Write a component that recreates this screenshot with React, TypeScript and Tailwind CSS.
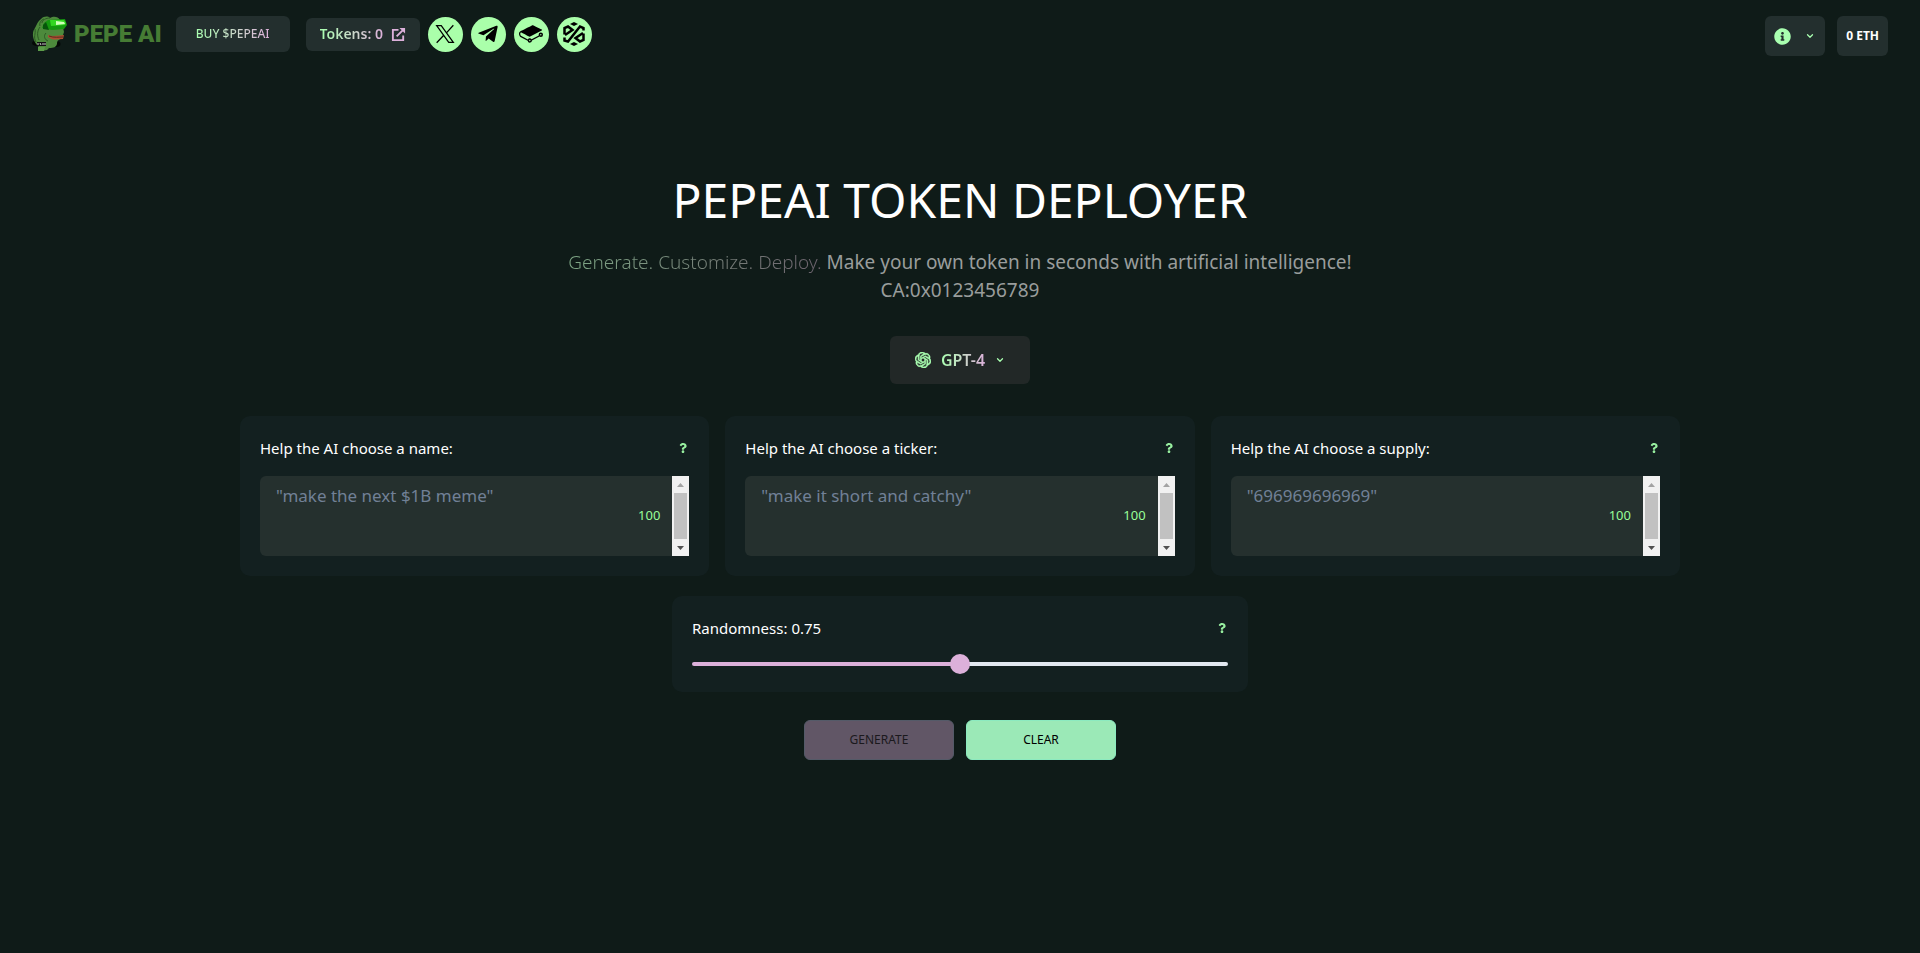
import { useState } from "react";
import { FaTelegramPlane, FaInfoCircle, FaQuestion } from "react-icons/fa";
import { SiOpenai } from "react-icons/si";
import { FiChevronDown } from "react-icons/fi";

const gradientText = "bg-gradient-to-r from-[#a9ffb0] to-[#dcb0da] bg-clip-text text-transparent";

function FrogLogo() {
  return (
    <svg viewBox="0 0 36 38" className="h-[38px] w-9" aria-hidden="true">
      <ellipse cx="5" cy="28" rx="5" ry="3" fill="#050806" />
      <ellipse cx="24" cy="29" rx="4.500" ry="3" fill="#050806" />
      <path d="M7 32C1 27-1 18 3 13 5 9 6 6 9 4c3-3 7-3 9-1 3-2 8-2 10 2l2 3 2 9-2 6c-3 2-5 2-5 6-1 3-3 4-8 4l-2 2-6 1z" fill="#4d8a3c" />
      <path d="M3 14c1 5-2 8 1 13M8 12c-3 4-3 9-1 13M12 4c-3 1-5 4-4 7m10-8c-4 0-8 2-8 5m4 10c-3 3-1 7 2 8" fill="none" stroke="#2c5a24" strokeWidth="1" />
      <path d="M12 8 16 5 33 4l2 6-3 4-12 1-10-2z" fill="#14980f" />
      <path d="M11 10 14 7l3 8-6-1z" fill="#07550b" />
      <path d="M18 5h14l2 3-1 2-14 1z" fill="#32d721" />
      <path d="m24 6 8 1 1 2-9 1z" fill="#cfffb9" />
      <path d="M16 20c5 2 11 0 16 0l-1 4c-5 0-10 2-15-2z" fill="#a94f32" />
      <path d="M17 21c5 2 10 1 14 1" fill="none" stroke="#5d2c1e" strokeWidth="1" />
      <path d="M5 27h9v4H5z" fill="#111" />
      <path d="M6 28v2m2-2 1 2m2-2v2m2-2v2" stroke="#c8c8c8" strokeWidth="1" />
      <path d="M6 32h7l-1 4H6z" fill="#5c9c49" />
    </svg>
  );
}

function XIcon() {
  return (
    <svg viewBox="0 0 24 24" className="size-5" fill="none" stroke="currentColor" strokeWidth="1.500" aria-hidden="true">
      <path d="M2 2h5.500L22 22h-5.500zM22 1.500 13.500 11M10.500 13.500 2 22.500" />
    </svg>
  );
}

function GitbookIcon() {
  return (
    <svg viewBox="0 0 24 24" className="size-6" fill="currentColor" aria-hidden="true">
      <path d="M10.802 17.77a.703.703 0 11-.002 1.406.703.703 0 01.002-1.406m11.024-4.347a.703.703 0 11.001-1.406.703.703 0 01-.001 1.406m0-2.876a2.176 2.176 0 00-2.174 2.174c0 .233.039.465.115.691l-7.181 3.823a2.165 2.165 0 00-1.784-.937c-.829 0-1.584.475-1.95 1.216l-6.451-3.402c-.682-.358-1.192-1.48-1.138-2.502.028-.533.212-.947.493-1.107.178-.1.392-.092.62.027l.042.023c1.71.9 7.304 3.847 7.54 3.956.363.169.565.237 1.185-.057l11.564-6.014c.17-.064.368-.227.368-.474 0-.342-.354-.477-.355-.477-.658-.315-1.669-.788-2.655-1.25-2.108-.987-4.497-2.105-5.546-2.655-.906-.474-1.635-.074-1.765.006l-.252.125C7.78 6.048 1.46 9.178 1.1 9.397.457 9.789.058 10.57.006 11.539c-.08 1.537.703 3.14 1.824 3.727l6.822 3.518a2.175 2.175 0 002.15 1.862 2.177 2.177 0 002.173-2.14l7.514-4.073c.38.298.853.461 1.337.461A2.176 2.176 0 0024 12.72a2.176 2.176 0 00-2.174-2.174" />
    </svg>
  );
}

function DextoolsIcon() {
  return (
    <svg viewBox="0 0 24 24" className="size-6" fill="none" stroke="currentColor" strokeWidth="2.500" aria-hidden="true">
      <path d="M12 0 16 2 12 4 8 2zM12 20l4 2-4 2-4-2z" fill="currentColor" stroke="none" />
      <path d="M2.500 12.500V6L6 4.500l4.500 3.500L3 13M21.500 11.500V18L18 19.500 13.500 16l7.500-5" />
      <path d="M2.500 15.500v3L6 19.500 18 4.500l3.500 1.500v2.500" />
    </svg>
  );
}

function ExternalLinkIcon() {
  return (
    <svg viewBox="0 0 16 16" className="size-[15px]" fill="none" stroke="#dcb0da" strokeWidth="2" aria-hidden="true">
      <path d="M8 3H2v11h11V9M6 10l7-7" />
      <path d="M9 1h6v6z" fill="#dcb0da" stroke="none" />
    </svg>
  );
}

function SocialLink({ label, children }: { label: string; children: React.ReactNode }) {
  return (
    <a href="#" aria-label={label} className="flex size-[35px] items-center justify-center rounded-full bg-[#aaffaa] text-black">
      {children}
    </a>
  );
}

function HelpButton({ topic }: { topic: string }) {
  return (
    <button type="button" aria-label={"About " + topic} className="px-px text-[#98f0a0]">
      <FaQuestion className="size-[10px]" />
    </button>
  );
}

function Scrollbar() {
  return (
    <div aria-hidden="true" className="flex w-[17px] shrink-0 flex-col items-center justify-between bg-[#f1f1f1]">
      <svg viewBox="0 0 17 17" className="size-[17px]"><path d="M5 11h7L8.500 7z" fill="#a3a3a3" /></svg>
      <div className="w-[13px] grow bg-[#c1c1c1]" />
      <svg viewBox="0 0 17 17" className="size-[17px]"><path d="M5 7h7l-3.500 4z" fill="#505050" /></svg>
    </div>
  );
}

function PromptCard({ id, placeholder }: { id: string; placeholder: string }) {
  const [value, setValue] = useState("");
  return (
    <section className="rounded-[10px] bg-[#132020] p-5">
      <div className="mb-4 flex h-6 items-center justify-between">
        <label htmlFor={id} className="text-[15px] text-white">Help the AI choose a {id}:</label>
        <HelpButton topic={id} />
      </div>
      <div className="flex h-20 overflow-hidden rounded-l-md bg-[#25302e]">
        <textarea
          id={id}
          maxLength={100}
          value={value}
          onChange={(e) => setValue(e.target.value)}
          placeholder={placeholder}
          className="min-w-0 grow resize-none overflow-hidden bg-transparent px-4 py-2 text-[17px] leading-6 text-white outline-none placeholder:text-[#718096]"
        />
        <output htmlFor={id} className="mr-3 self-center text-[13px] text-[#98ff98]">{100 - value.length}</output>
        <Scrollbar />
      </div>
    </section>
  );
}

export default function App() {
  const [level, setLevel] = useState(75);
  return (
    <div className="min-h-screen bg-[#0f1b18] font-['Noto_Sans',sans-serif] text-white">
      <header className="flex items-start justify-between px-8 pt-4">
        <div className="flex h-9 items-center">
          <a href="#" className="mr-[14px] flex items-center gap-[6px]">
            <FrogLogo />
            <span className="font-[Roboto,sans-serif] text-2xl font-black text-[#467c34]">PEPE AI</span>
          </a>
          <a href="#" className="mr-4 flex h-9 items-center rounded-md bg-[#232f2e] px-5 text-xs font-medium">
            <span className={gradientText}>BUY $PEPEAI</span>
          </a>
          <a href="#" className="mr-2 flex h-[33px] items-center gap-2 rounded-md bg-[#232f2e] px-[14px] text-sm font-semibold">
            <span className={gradientText}>Tokens: 0</span>
            <ExternalLinkIcon />
          </a>
          <nav className="flex gap-2">
            <SocialLink label="X"><XIcon /></SocialLink>
            <SocialLink label="Telegram"><FaTelegramPlane className="size-[22px]" /></SocialLink>
            <SocialLink label="Docs"><GitbookIcon /></SocialLink>
            <SocialLink label="DEXTools"><DextoolsIcon /></SocialLink>
          </nav>
        </div>
        <div className="flex gap-3">
          <button type="button" aria-label="Network" className="flex h-10 items-center gap-[14px] rounded-md bg-[#232f2e] pr-[10px] pl-[9px] text-[#a9ffb0]">
            <FaInfoCircle className="size-[17px]" />
            <FiChevronDown className="size-[10px]" strokeWidth={3} />
          </button>
          <button type="button" className="h-10 rounded-md bg-[#232f2e] px-[9px] text-xs font-bold">0 ETH</button>
        </div>
      </header>

      <main className="mx-auto flex max-w-[1440px] flex-col items-center pt-[108px]">
        <h1 className="text-5xl leading-[72px] font-normal">PEPEAI TOKEN DEPLOYER</h1>
        <p className="mt-3 text-center text-[19px] leading-7 text-[#999d9c]">
          <span className="bg-gradient-to-r from-[#7ea685] to-[#6d636e] bg-clip-text font-light text-transparent">Generate. Customize. Deploy.</span>{" "}
          Make your own token in seconds with artificial intelligence!
          <br />
          CA:0x0123456789
        </p>
        <button type="button" className="mt-8 flex h-12 items-center gap-[10px] rounded-md bg-[#222827] px-[25px] text-base font-semibold">
          <SiOpenai className="size-4 text-[#a9ffb0]" stroke="currentColor" strokeWidth={1} />
          <span className={gradientText}>GPT-4</span>
          <FiChevronDown className="size-[10px] text-[#a9ffb0]" strokeWidth={3} />
        </button>

        <div className="mt-8 grid w-full grid-cols-3 gap-4">
          <PromptCard id="name" placeholder={'"make the next $1B meme"'} />
          <PromptCard id="ticker" placeholder={'"make it short and catchy"'} />
          <PromptCard id="supply" placeholder={'"696969696969"'} />
        </div>

        <section className="mt-5 w-full max-w-xl rounded-[10px] bg-[#132020] p-5">
          <div className="flex h-6 items-center justify-between">
            <label htmlFor="randomness" className="text-[15px]">Randomness: {(level / 100).toFixed(2)}</label>
            <HelpButton topic="randomness" />
          </div>
          <input
            id="randomness"
            type="range"
            min={0}
            max={150}
            value={level}
            onChange={(e) => setLevel(Number(e.target.value))}
            style={{ backgroundSize: `${(level / 150) * 100}% 100%` }}
            className="mt-[22px] mb-[6px] block h-1 w-full appearance-none rounded-sm bg-[#e2e8f0] bg-[linear-gradient(#dcb0da,#dcb0da)] bg-no-repeat [&::-webkit-slider-thumb]:size-5 [&::-webkit-slider-thumb]:appearance-none [&::-webkit-slider-thumb]:rounded-full [&::-webkit-slider-thumb]:bg-[#dcb0da]"
          />
        </section>

        <div className="mt-7 flex gap-3 text-xs text-black">
          <button type="button" className="h-10 w-[150px] rounded-md border border-[#545a68] bg-[#615666] text-[#1b191d]">GENERATE</button>
          <button type="button" className="h-10 w-[150px] rounded-md border border-[#8ceac0] bg-[#9be9b7]">CLEAR</button>
        </div>
      </main>
    </div>
  );
}
